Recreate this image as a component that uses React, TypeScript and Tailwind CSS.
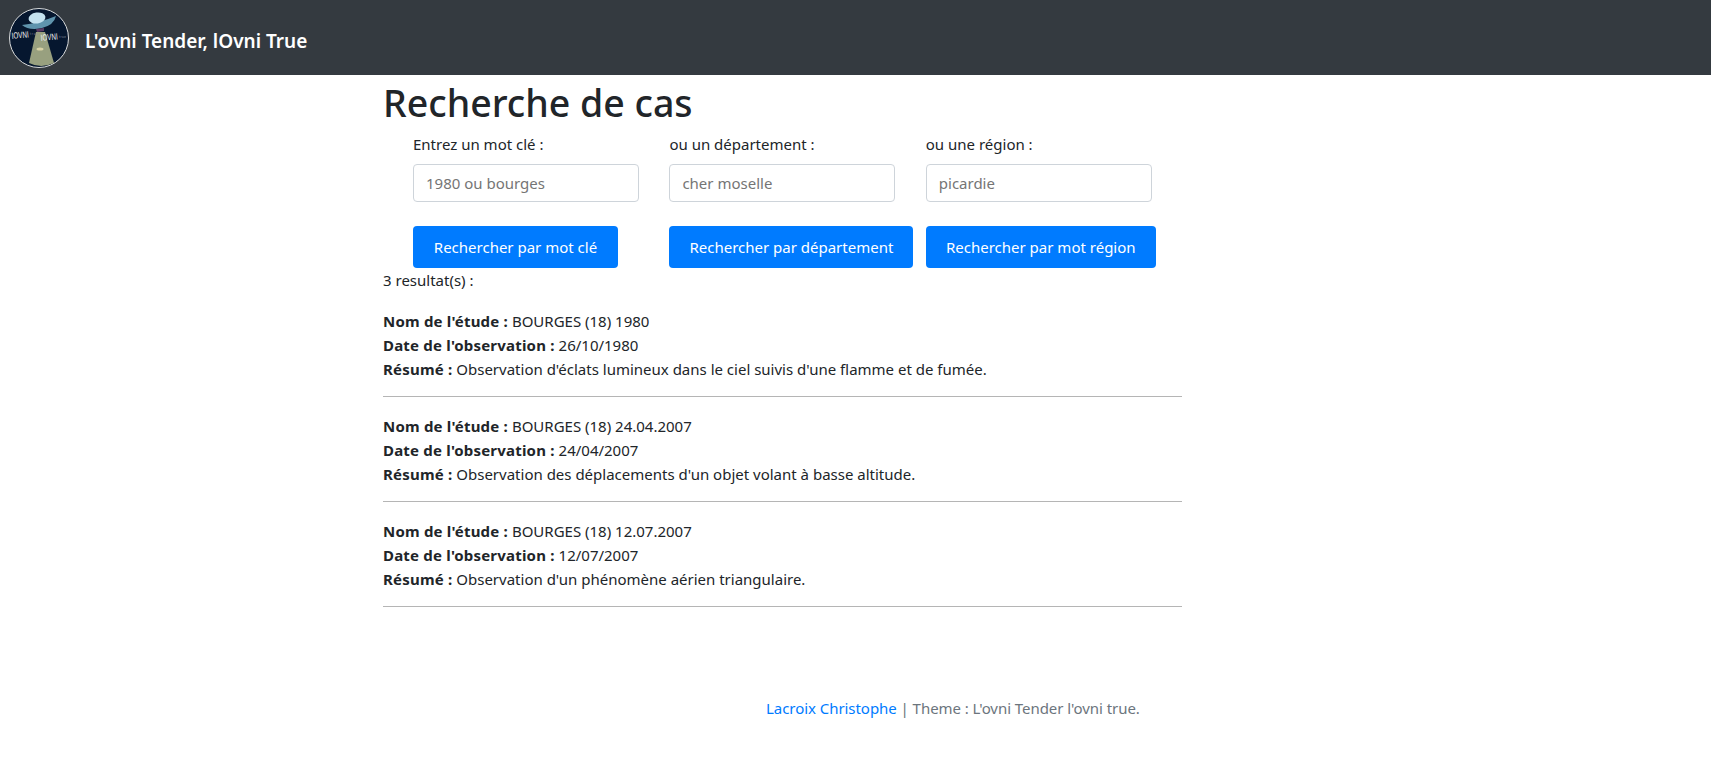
import React from "react";

const results = [
  {
    nom: "BOURGES (18) 1980",
    date: "26/10/1980",
    resume: "Observation d'éclats lumineux dans le ciel suivis d'une flamme et de fumée.",
  },
  {
    nom: "BOURGES (18) 24.04.2007",
    date: "24/04/2007",
    resume: "Observation des déplacements d'un objet volant à basse altitude.",
  },
  {
    nom: "BOURGES (18) 12.07.2007",
    date: "12/07/2007",
    resume: "Observation d'un phénomène aérien triangulaire.",
  },
];

const searches = [
  { label: "Entrez un mot clé :", placeholder: "1980 ou bourges", button: "Rechercher par mot clé", width: "w-[205px]" },
  { label: "ou un département :", placeholder: "cher moselle", button: "Rechercher par département", width: "w-[244px]" },
  { label: "ou une région :", placeholder: "picardie", button: "Rechercher par mot région", width: "w-[230px]" },
];

const Logo: React.FC = () => (
  <svg width="60" height="60" viewBox="0 0 60 60" className="shrink-0">
    <circle cx="30" cy="30" r="29.5" fill="#06172f" stroke="#d8dadb" strokeWidth="1" />
    <path d="M27 24 L36 24 L45 55 Q32 61 20 55 Z" fill="#98a07f" />
    <ellipse cx="31" cy="41" rx="3.5" ry="1.6" fill="#d9d3a6" />
    <path d="M13 17 Q30 15 47 8 Q45 17 33 20 Q20 23 13 17 Z" fill="#5f94ad" />
    <ellipse cx="28" cy="10" rx="8.5" ry="5.5" fill="#c4e2ef" transform="rotate(-8 28 10)" />
    <path d="M27 21 L35 20 L35 23 L28 24 Z" fill="#5b3b63" />
    <text x="3" y="31" fill="#f2f2f2" fontSize="9" textLength="17" lengthAdjust="spacingAndGlyphs" fontFamily="Liberation Sans, sans-serif" transform="rotate(-6 3 31)">IOVNI</text>
    <text x="21" y="27" fill="#8d94a3" fontSize="3" textLength="8" fontFamily="Liberation Sans, sans-serif">true</text>
    <text x="32" y="33" fill="#f2f2f2" fontSize="9" textLength="17" lengthAdjust="spacingAndGlyphs" fontFamily="Liberation Sans, sans-serif" transform="rotate(-6 32 33)">IOVNI</text>
    <text x="50" y="30" fill="#8d94a3" fontSize="3" textLength="7" fontFamily="Liberation Sans, sans-serif">true</text>
  </svg>
);

const App: React.FC = () => {
  return (
    <div className="min-h-[779px] bg-white font-['Noto_Sans',sans-serif] text-[15px] leading-6 text-[#212529]">
      <nav className="flex h-[75px] items-center bg-[#343a40] pl-[9px]">
        <Logo />
        <span className="mt-[6px] ml-[16px] text-[19px] font-semibold text-white">L'ovni Tender, lOvni True</span>
      </nav>

      <main className="ml-[383px] w-[799px]">
        <h1 className="text-[37.5px] leading-[56px] font-medium">Recherche de cas</h1>

        <div className="mt-[1px] flex pl-[30px]">
          {searches.map((s) => (
            <div key={s.label} className="w-[256.4px] shrink-0">
              <label className="block">{s.label}</label>
              <input
                placeholder={s.placeholder}
                className="mt-[8px] block h-[38px] w-[226px] rounded border border-[#ced4da] px-3 placeholder:text-[#757575]"
              />
              <button className={`mt-6 h-[42px] whitespace-nowrap rounded bg-[#007bff] text-white ${s.width}`}>
                {s.button}
              </button>
            </div>
          ))}
        </div>

        <p>3 resultat(s) :</p>

        <div className="mt-[17px]">
          {results.map((r) => (
            <div key={r.nom} className="mb-[17px] border-b border-[#b5b5b5] pb-[15px]">
              <div><strong className="tracking-[0.2px]">Nom de l'étude :</strong> {r.nom}</div>
              <div><strong className="tracking-[0.2px]">Date de l'observation :</strong> {r.date}</div>
              <div><strong className="tracking-[0.2px]">Résumé :</strong> {r.resume}</div>
            </div>
          ))}
        </div>
      </main>

      <footer className="mt-[89px] pl-[766px] tracking-[-0.05px] text-[#6c757d]">
        <a className="text-[#007bff]">Lacroix Christophe</a> | Theme : L'ovni Tender l'ovni true.
      </footer>
    </div>
  );
};

export default App;
